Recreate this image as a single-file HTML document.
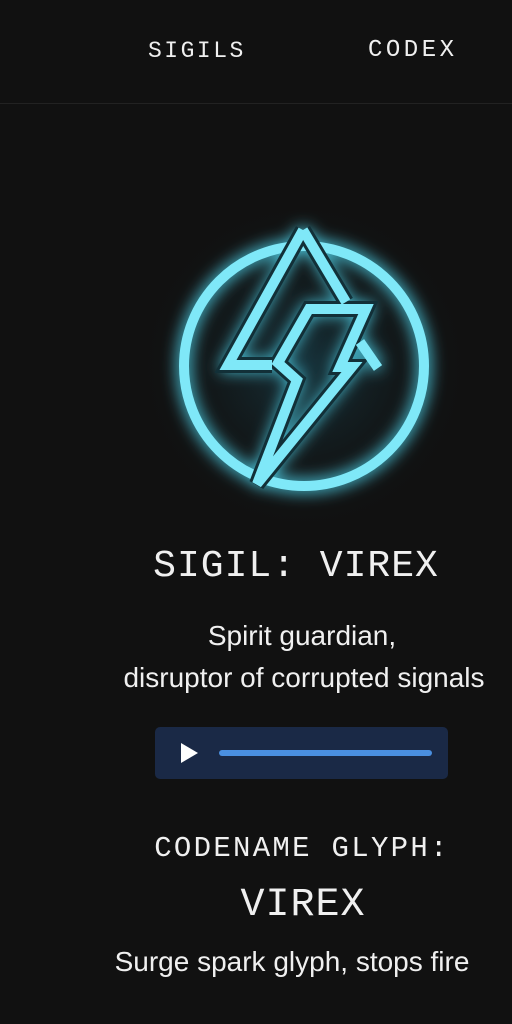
<!DOCTYPE html>
<html><head><style>
body{margin:0;width:512px;height:1024px;background:#111111;overflow:hidden;position:relative;font-family:"Liberation Sans",sans-serif;color:#f0f0f0}
.t{position:absolute;white-space:nowrap}
.m{font-family:"Liberation Mono",monospace}
</style></head><body>
<div class="t m" style="left:148px;top:38px;font-size:23px;letter-spacing:2.5px">SIGILS</div>
<div class="t m" style="left:368px;top:37px;font-size:24px;letter-spacing:3.5px">CODEX</div>
<div style="position:absolute;left:0;top:103px;width:512px;height:1px;background:#222"></div>
<svg style="position:absolute;left:0;top:0" width="512" height="1024">
<defs><filter id="g" x="-30%" y="-30%" width="160%" height="160%"><feGaussianBlur stdDeviation="8"/></filter>
<radialGradient id="bg" cx="304" cy="366" r="170" gradientUnits="userSpaceOnUse"><stop offset="0" stop-color="#1a4b5a" stop-opacity=".6"/><stop offset="1" stop-color="#111" stop-opacity="0"/></radialGradient></defs>
<circle cx="304" cy="366" r="170" fill="url(#bg)"/>
<g fill="none" stroke="#4fd8f0" stroke-width="12" stroke-linejoin="miter" filter="url(#g)">
<circle cx="304" cy="366" r="120"/>
<polyline points="303,230 228,365 272,365"/>
<line x1="303" y1="230" x2="346" y2="302"/>
<polygon points="309,309 366,309 340,367 352,367 257,484 297,380 278,363"/>
<line x1="360" y1="342" x2="378" y2="368"/>
</g>
<g fill="none" stroke="#7fe8f8" stroke-width="10">
<circle cx="304" cy="366" r="120"/>
</g>
<g fill="none" stroke="#123038" stroke-width="16">
<polyline points="303,230 228,365 272,365"/>
<line x1="303" y1="230" x2="346" y2="302"/>
<polygon points="309,309 366,309 340,367 352,367 257,484 297,380 278,363"/>
</g>
<g fill="none" stroke="#7fe8f8" stroke-width="10" stroke-linejoin="miter">
<polyline points="303,230 228,365 272,365"/>
<line x1="303" y1="230" x2="346" y2="302"/>
<polygon points="309,309 366,309 340,367 352,367 257,484 297,380 278,363"/>
<line x1="360" y1="342" x2="378" y2="368"/>
</g>
</svg>
<div class="t m" style="left:0;width:592px;text-align:center;top:545px;font-size:38px;letter-spacing:1px">SIGIL: VIREX</div>
<div class="t" style="left:0;width:604px;text-align:center;top:620px;font-size:28px">Spirit guardian,</div>
<div class="t" style="left:0;width:608px;text-align:center;top:662px;font-size:28px">disruptor of corrupted signals</div>
<div style="position:absolute;left:155px;top:727px;width:293px;height:52px;background:#1a2946;border-radius:5px"></div>
<div style="position:absolute;left:181px;top:743px;width:0;height:0;border-left:17px solid #fff;border-top:10px solid transparent;border-bottom:10px solid transparent"></div>
<div style="position:absolute;left:219px;top:750px;width:213px;height:6px;background:#4a8fe0;border-radius:3px"></div>
<div class="t m" style="left:0;width:604px;text-align:center;top:832px;font-size:29px;letter-spacing:2.3px">CODENAME GLYPH:</div>
<div class="t m" style="left:0;width:606px;text-align:center;top:883px;font-size:40px;letter-spacing:1px">VIREX</div>
<div class="t" style="left:0;width:584px;text-align:center;top:946px;font-size:28px">Surge spark glyph, stops fire</div>
</body></html>
